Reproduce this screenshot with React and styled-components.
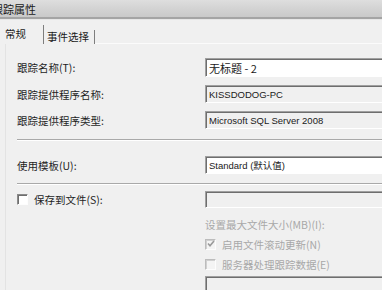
import React from "react";
import styled, { createGlobalStyle } from "styled-components";

const GlobalStyle = createGlobalStyle`
  html, body {
    margin: 0;
    padding: 0;
    background: #f0f0f0;
    overflow: hidden;
  }
`;

const Window = styled.div`
  width: 382px;
  height: 290px;
  overflow: hidden;
  background: #f0f0f0;
  font-family: "Liberation Sans", "Noto Sans CJK SC", sans-serif;
  color: #1e1e1e;
  font-size: 10.5px;
`;

const TitleBar = styled.div`
  height: 17px;
  background: linear-gradient(180deg, #dedede 0%, #d2d2d2 55%, #c9c9c9 100%);
  border-bottom: 2px solid #a4a4a4;
  box-shadow: 0 1px 0 #e6e6e6;
  display: flex;
  align-items: center;
`;

const TitleText = styled.span`
  margin-left: -8px;
  font-family: "Noto Sans CJK SC", sans-serif;
  font-size: 11px;
  color: #1a1a1a;
`;

const TabBar = styled.div`
  height: 25px;
  display: flex;
  align-items: flex-end;
`;

const Tab = styled.div`
  box-sizing: border-box;
  height: ${({ $active }) => ($active ? "19px" : "14px")};
  width: ${({ $w }) => $w}px;
  padding-left: ${({ $pad }) => $pad}px;
  padding-bottom: ${({ $active }) => ($active ? "4px" : "1px")};
  border-right: 1px solid #7e7e7e;
  display: flex;
  align-items: flex-end;
  font-family: "Noto Sans CJK SC", sans-serif;
  font-size: 10.5px;
  line-height: 12px;
  color: #1a1a1a;
`;

const TabFill = styled.div`
  flex: 1;
  height: 1px;
  background: #fbfbfb;
`;

const Panel = styled.div`
  margin-left: 5px;
  border-left: 1px solid #e3e3e3;
  padding: 14px 0 0 11px;
  height: 260px;
`;

const FormGrid = styled.div`
  display: grid;
  grid-template-columns: 188px 240px;
  row-gap: ${({ $gap }) => $gap || 0}px;
  align-items: center;
`;

const Label = styled.div`
  font-family: "Noto Sans CJK SC", sans-serif;
  font-size: 10.5px;
  white-space: nowrap;
  color: #1e1e1e;
`;

const Field = styled.div`
  box-sizing: border-box;
  height: ${({ $h }) => $h}px;
  background: ${({ $white }) => ($white ? "#ffffff" : "#f0f0f0")};
  border-top: 1px solid #a0a0a0;
  border-left: 1px solid #a0a0a0;
  border-right: 1px solid #ffffff;
  border-bottom: 1px solid #ffffff;
  box-shadow: inset 1px 1px 0 #6e6e6e;
  padding-left: 3px;
  display: flex;
  align-items: center;
  font-size: ${({ $size }) => $size || 9.5}px;
  font-family: ${({ $cjk }) =>
    $cjk ? '"Noto Sans CJK SC", sans-serif' : '"Liberation Sans", "Noto Sans CJK SC", sans-serif'};
  white-space: nowrap;
  color: #1a1a1a;
`;

const Separator = styled.div`
  height: 1px;
  background: #a9a9a9;
  border-bottom: 1px solid #ffffff;
  margin: ${({ $top }) => $top}px 0 ${({ $bottom }) => $bottom}px;
`;

const CheckRow = styled.div`
  display: flex;
  align-items: center;
  gap: 6px;
  height: ${({ $h }) => $h || 14}px;
  grid-column: ${({ $col }) => $col || "auto"};
  margin-top: ${({ $mt }) => $mt || 0}px;
  font-family: "Noto Sans CJK SC", sans-serif;
  font-size: 10.5px;
  white-space: nowrap;
  color: ${({ $disabled }) => ($disabled ? "#a8a8a8" : "#1e1e1e")};
`;

const Box = styled.span`
  box-sizing: border-box;
  width: 11px;
  height: 11px;
  flex: none;
  background: ${({ $disabled }) => ($disabled ? "#f4f4f4" : "#ffffff")};
  border-top: 1px solid ${({ $disabled }) => ($disabled ? "#bcbcbc" : "#8a8a8a")};
  border-left: 1px solid ${({ $disabled }) => ($disabled ? "#bcbcbc" : "#8a8a8a")};
  border-right: 1px solid #fdfdfd;
  border-bottom: 1px solid #fdfdfd;
  box-shadow: inset 1px 1px 0 ${({ $disabled }) => ($disabled ? "#d0d0d0" : "#6e6e6e")};
  display: flex;
  align-items: center;
  justify-content: center;
`;

const GrayText = styled.div`
  grid-column: 2;
  margin-top: ${({ $mt }) => $mt || 0}px;
  line-height: 14px;
  font-family: "Noto Sans CJK SC", sans-serif;
  font-size: 10.5px;
  white-space: nowrap;
  color: #a8a8a8;
`;

const Spacer = styled.div`
  grid-column: 2;
  margin-top: ${({ $mt }) => $mt || 0}px;
`;

const Check = () => (
  <svg width="8" height="8" viewBox="0 0 8 8">
    <path d="M1 3.5 L3 5.8 L7 1" fill="none" stroke="#9a9a9a" strokeWidth="1.6" />
  </svg>
);

export default function App() {
  return (
    <Window>
      <GlobalStyle />
      <TitleBar>
        <TitleText>跟踪属性</TitleText>
      </TitleBar>
      <TabBar>
        <Tab $active $w={44} $pad={5}>常规</Tab>
        <Tab $w={51} $pad={3}>事件选择</Tab>
        <TabFill />
      </TabBar>
      <Panel>
        <FormGrid $gap={8}>
          <Label>跟踪名称(T):</Label>
          <Field $white $h={19} $size={11} $cjk>无标题 - 2</Field>
          <Label>跟踪提供程序名称:</Label>
          <Field $h={18}>KISSDODOG-PC</Field>
          <Label>跟踪提供程序类型:</Label>
          <Field $h={18}>Microsoft SQL Server 2008</Field>
        </FormGrid>
        <Separator $top={10} $bottom={15} />
        <FormGrid>
          <Label>使用模板(U):</Label>
          <Field $white $h={18}>Standard (默认值)</Field>
        </FormGrid>
        <Separator $top={9} $bottom={6} />
        <FormGrid>
          <CheckRow>
            <Box />
            保存到文件(S):
          </CheckRow>
          <Field $h={17} />
          <GrayText $mt={10}>设置最大文件大小(MB)(I):</GrayText>
          <CheckRow $col={2} $h={20} $mt={2} $disabled>
            <Box $disabled>
              <Check />
            </Box>
            启用文件滚动更新(N)
          </CheckRow>
          <CheckRow $col={2} $h={20} $disabled>
            <Box $disabled />
            服务器处理跟踪数据(E)
          </CheckRow>
          <Spacer $mt={2}>
            <Field $h={20} />
          </Spacer>
        </FormGrid>
      </Panel>
    </Window>
  );
}
